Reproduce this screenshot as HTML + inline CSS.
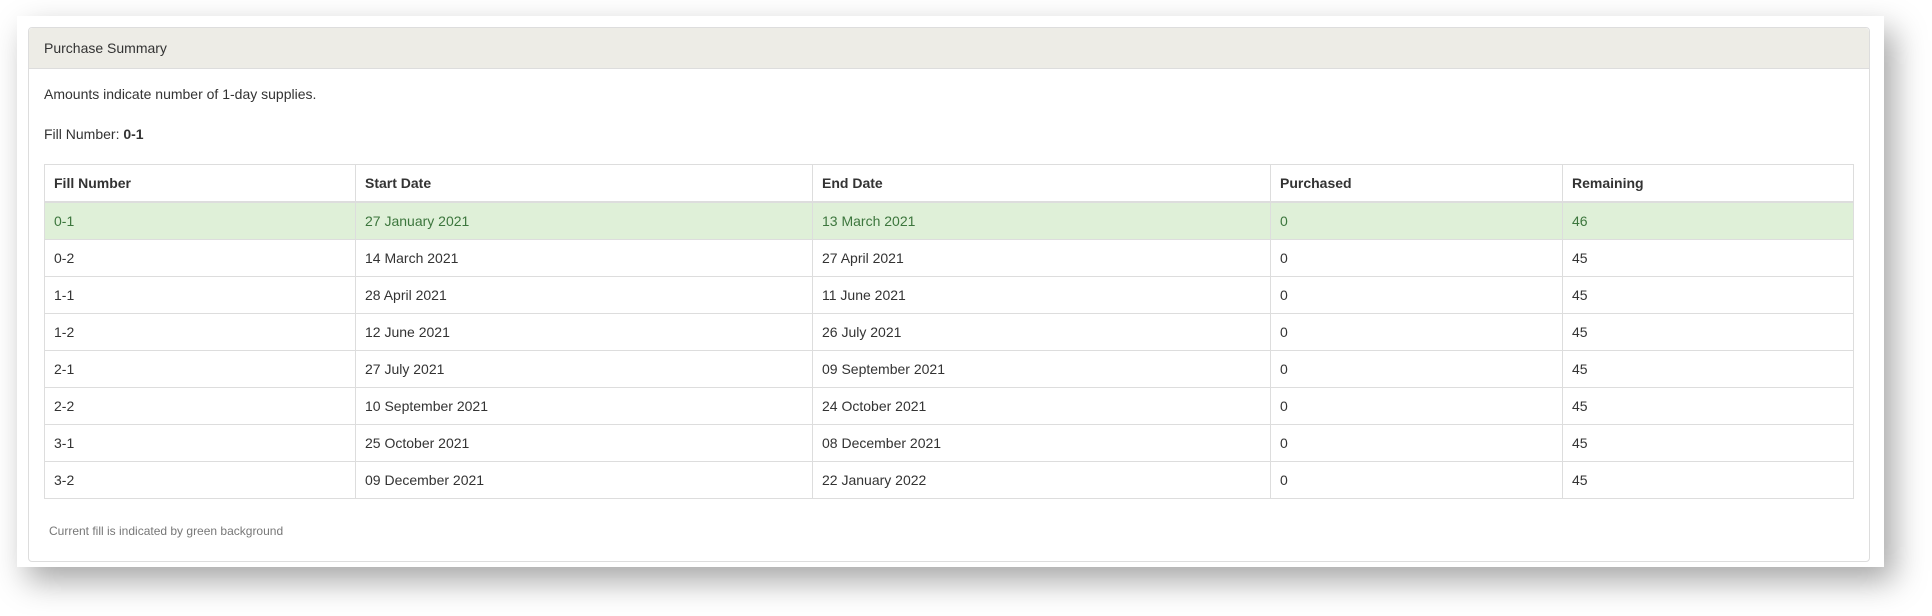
<!DOCTYPE html>
<html><head><style>
body{margin:0;width:1932px;height:616px;background:#fff;position:relative;overflow:hidden;font-family:"Liberation Sans",Arial,sans-serif;color:#333}
.shot{position:absolute;left:17px;top:16px;width:1867px;height:551px;background:#fff;box-shadow:10px 14px 30px rgba(0,0,0,.35)}
.panel{position:absolute;left:28px;top:27px;width:1840px;height:533px;border:1px solid #ddd;border-radius:4px;background:#fff}
.hd{height:40px;background:#edece6;border-bottom:1px solid #ddd;font-size:14px;line-height:40px;padding-left:15px;border-radius:4px 4px 0 0}
.p1{position:absolute;left:15px;top:58px;font-size:14px}
.p2{position:absolute;left:15px;top:98px;font-size:14px}
table{position:absolute;left:15px;top:136px;width:1810px;border-collapse:collapse;font-size:14px}
td,th{border:1px solid #ddd;height:36px;padding:0 0 0 9px;text-align:left;vertical-align:middle}
th{font-weight:bold;border-bottom:2px solid #ddd}
tr.g td{background:#dff0d8;color:#3c763d}
.ft{position:absolute;left:20px;top:496px;font-size:12px;color:#777}
</style></head><body>
<div class="shot"></div>
<div class="panel">
<div class="hd">Purchase Summary</div>
<div class="p1">Amounts indicate number of 1-day supplies.</div>
<div class="p2">Fill Number: <b>0-1</b></div>
<table>
<tr><th style="width:301px">Fill Number</th><th style="width:447px">Start Date</th><th style="width:448px">End Date</th><th style="width:282px">Purchased</th><th>Remaining</th></tr>
<tr class="g"><td>0-1</td><td>27 January 2021</td><td>13 March 2021</td><td>0</td><td>46</td></tr>
<tr><td>0-2</td><td>14 March 2021</td><td>27 April 2021</td><td>0</td><td>45</td></tr>
<tr><td>1-1</td><td>28 April 2021</td><td>11 June 2021</td><td>0</td><td>45</td></tr>
<tr><td>1-2</td><td>12 June 2021</td><td>26 July 2021</td><td>0</td><td>45</td></tr>
<tr><td>2-1</td><td>27 July 2021</td><td>09 September 2021</td><td>0</td><td>45</td></tr>
<tr><td>2-2</td><td>10 September 2021</td><td>24 October 2021</td><td>0</td><td>45</td></tr>
<tr><td>3-1</td><td>25 October 2021</td><td>08 December 2021</td><td>0</td><td>45</td></tr>
<tr><td>3-2</td><td>09 December 2021</td><td>22 January 2022</td><td>0</td><td>45</td></tr>
</table>
<div class="ft">Current fill is indicated by green background</div>
</div>
</body></html>
